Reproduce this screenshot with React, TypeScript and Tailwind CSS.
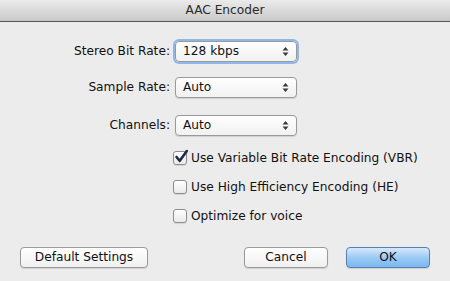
import React from "react";

const font = { fontFamily: '"DejaVu Sans", "Lucida Grande", sans-serif' };

function Arrows() {
  return (
    <svg width="7" height="11" viewBox="0 0 7 11" className="shrink-0">
      <path d="M3.5 1 L6.5 4.5 L0.5 4.5 Z" fill="#3a3a3a" />
      <path d="M3.5 10 L6.5 6.5 L0.5 6.5 Z" fill="#3a3a3a" />
    </svg>
  );
}

function Popup({ value, focused }: { value: string; focused?: boolean }) {
  return (
    <div
      className={`w-[122px] h-[21px] flex items-center justify-between pl-[7px] pr-[7px] rounded-[4px] border border-[#9a9a9a] bg-gradient-to-b from-[#ffffff] to-[#f1f1f1] text-[12.2px] text-[#111] ${
        focused ? "shadow-[0_0_0_2px_#8fb8ea]" : "shadow-[0_1px_1px_rgba(0,0,0,0.12)]"
      }`}
    >
      <span className="leading-none">{value}</span>
      <Arrows />
    </div>
  );
}

function Row({ label, value, focused, mt }: { label: string; value: string; focused?: boolean; mt: string }) {
  return (
    <div className={`flex items-center ${mt}`}>
      <span className="w-[170px] text-right text-[12.2px] text-[#111] leading-none">{label}</span>
      <div className="w-[5px]" />
      <Popup value={value} focused={focused} />
    </div>
  );
}

function Check({ checked, label, mt }: { checked?: boolean; label: string; mt: string }) {
  return (
    <div className={`flex items-center gap-[4px] h-[14px] ${mt}`}>
      <div className="relative w-[14px] h-[14px] rounded-[3px] border border-[#8e8e8e] bg-gradient-to-b from-[#ffffff] to-[#e9e9e9] shadow-[0_1px_1px_rgba(0,0,0,0.1)]">
        {checked && (
          <svg width="15" height="15" viewBox="0 0 15 15" className="absolute left-[0px] top-[-3px]">
            <path d="M2.5 8 L5.8 11.8 L12.8 2" fill="none" stroke="#1d2b4a" strokeWidth="2.6" strokeLinecap="round" strokeLinejoin="round" />
          </svg>
        )}
      </div>
      <span className="text-[12.2px] text-[#111] leading-none">{label}</span>
    </div>
  );
}

function Button({ label, primary, w }: { label: string; primary?: boolean; w: string }) {
  return (
    <div
      className={`${w} h-[21px] flex items-center justify-center rounded-[4px] border text-[12.2px] text-[#111] shadow-[0_1px_1px_rgba(0,0,0,0.12)] ${
        primary
          ? "border-[#5b7fae] bg-gradient-to-b from-[#d6e9fb] via-[#9ccbf5] to-[#78b8f0]"
          : "border-[#9a9a9a] bg-gradient-to-b from-[#ffffff] to-[#f0f0f0]"
      }`}
    >
      {label}
    </div>
  );
}

export default function App() {
  return (
    <div className="w-[450px] h-[281px] bg-[#ececec] flex flex-col overflow-hidden" style={font}>
      <div className="h-[22px] shrink-0 flex items-center justify-center bg-gradient-to-b from-[#ebebeb] to-[#c9c9c9] border-b border-[#555]">
        <span className="text-[12.2px] text-[#2a2a2a] leading-none">AAC Encoder</span>
      </div>
      <div className="flex flex-col">
        <Row label="Stereo Bit Rate:" value="128 kbps" focused mt="mt-[19px]" />
        <Row label="Sample Rate:" value="Auto" mt="mt-[15px]" />
        <Row label="Channels:" value="Auto" mt="mt-[17px]" />
        <div className="flex flex-col pl-[173px]">
          <Check checked label="Use Variable Bit Rate Encoding (VBR)" mt="mt-[15px]" />
          <Check label="Use High Efficiency Encoding (HE)" mt="mt-[15px]" />
          <Check label="Optimize for voice" mt="mt-[15px]" />
        </div>
        <div className="flex items-center pl-[20px] pr-[20px] mt-[24px]">
          <Button label="Default Settings" w="w-[128px]" />
          <div className="flex-1" />
          <Button label="Cancel" w="w-[84px]" />
          <div className="w-[18px]" />
          <Button label="OK" primary w="w-[84px]" />
        </div>
      </div>
    </div>
  );
}
